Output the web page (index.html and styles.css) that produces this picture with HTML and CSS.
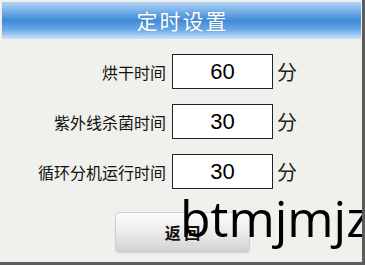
FILE: index.html
```html
<!DOCTYPE html>
<html lang="zh-CN">
<head>
<meta charset="utf-8">
<title>定时设置</title>
<link rel="stylesheet" href="styles.css">
</head>
<body>
<div class="window">
  <div class="header"><span class="title">定时设置</span></div>
  <div class="form">
    <div class="row">
      <span class="label">烘干时间</span>
      <div class="box">60</div>
      <span class="unit">分</span>
    </div>
    <div class="row">
      <span class="label">紫外线杀菌时间</span>
      <div class="box">30</div>
      <span class="unit">分</span>
    </div>
    <div class="row">
      <span class="label">循环分机运行时间</span>
      <div class="box">30</div>
      <span class="unit">分</span>
    </div>
  </div>
  <div class="actions">
    <button class="btn">返 回</button>
  </div>
  <div class="watermark">btmjmjz</div>
</div>
</body>
</html>
```
FILE: styles.css
```css
html, body {
  margin: 0;
  padding: 0;
}
body {
  width: 365px;
  height: 265px;
  overflow: hidden;
  background: #f0f0ec;
}
.window {
  position: relative;
  box-sizing: border-box;
  width: 365px;
  height: 265px;
  padding: 2px 1px 0 2px;
  background: #f0f0ec;
  border-right: 3px solid #5c5c5c;
  border-bottom: 3px solid #5c5c5c;
  font-family: "Noto Sans CJK SC", "Liberation Sans", sans-serif;
  overflow: hidden;
}
.header {
  height: 37px;
  display: flex;
  align-items: center;
  justify-content: center;
  background: linear-gradient(to bottom, #b3d4f3 0%, #7db4ea 22%, #3f8ad7 50%, #6ca9e6 75%, #cbe3f8 100%);
}
.title {
  color: #ffffff;
  font-size: 21px;
  letter-spacing: 2px;
  padding-left: 2px;
  line-height: 1;
  text-shadow: 0 0 1px rgba(40, 90, 150, 0.5);
}
.form {
  display: flex;
  flex-direction: column;
  gap: 15px;
  padding-top: 15px;
}
.row {
  display: flex;
  align-items: center;
  height: 35px;
}
.label {
  width: 164px;
  text-align: right;
  font-size: 16px;
  color: #111;
  line-height: 1;
}
.box {
  box-sizing: border-box;
  width: 101px;
  height: 35px;
  margin-left: 6px;
  border: 1px solid #222;
  background: #fff;
  display: flex;
  align-items: center;
  justify-content: center;
  font-family: "Liberation Sans", Arial, sans-serif;
  font-size: 22px;
  color: #000;
}
.unit {
  margin-left: 4px;
  font-size: 20px;
  color: #222;
  line-height: 1;
}
.actions {
  padding-top: 23px;
  padding-left: 113px;
}
.btn {
  box-sizing: border-box;
  width: 135px;
  height: 40px;
  border: 1px solid #cfcfcf;
  border-radius: 4px;
  background: linear-gradient(to bottom, #fbfbfb 0%, #ececec 50%, #d2d2d2 100%);
  font-family: "Noto Sans CJK SC", sans-serif;
  font-size: 16px;
  font-weight: bold;
  color: #111;
  padding: 0;
  box-shadow: 0 1px 1px rgba(0, 0, 0, 0.15);
}
.watermark {
  position: absolute;
  left: 180px;
  top: 184px;
  font-family: "Open Sans", sans-serif;
  font-size: 50px;
  color: #000;
  white-space: nowrap;
  line-height: normal;
}
```
